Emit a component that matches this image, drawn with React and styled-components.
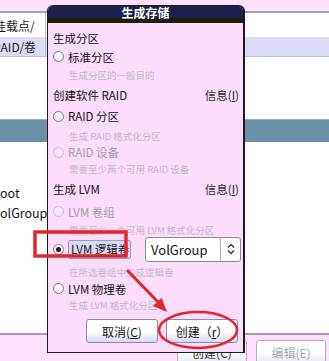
import React from "react";
import styled, { createGlobalStyle } from "styled-components";

const Global = createGlobalStyle`
  html, body { margin: 0; padding: 0; background: #fde0fb; }
  body { font-family: "Noto Sans CJK SC", "Noto Sans", sans-serif; }
`;

const Page = styled.div`
  position: relative;
  width: 329px;
  height: 361px;
  overflow: hidden;
  background: #fde0fb;
  font-family: "Noto Sans CJK SC", "Noto Sans", sans-serif;
  display: flex;
  flex-direction: column;
`;

const TopStrip = styled.div`
  flex: none;
  height: 11px;
`;

const Panel = styled.div`
  flex: none;
  height: 320px;
  background: #ffffff;
  border-top: 2px solid #a99cb9;
  border-bottom: 2px solid #a99cb9;
  display: flex;
  flex-direction: column;
`;

const HeaderRow = styled.div`
  flex: none;
  display: flex;
  height: ${(p) => p.$h}px;
  background: ${(p) => (p.$band ? "#dcdcf6" : "#ffffff")};
  border-bottom: ${(p) => (p.$band ? "1px solid #c2c2cc" : "none")};
`;

const HeaderCell = styled.div`
  width: 45px;
  border-right: 1px solid #b8b8c4;
  overflow: hidden;
  display: flex;
  align-items: center;
  font-size: 12px;
  color: #1a1a1a;
  white-space: nowrap;
`;

const HeaderText = styled.span`
  margin-left: ${(p) => p.$shift}px;
`;

const Spacer = styled.div`
  flex: none;
  height: ${(p) => p.$h}px;
`;

const BlueBar = styled.div`
  flex: none;
  height: 22px;
  border-top: 1px solid #88b2d6;
  background: #6a91a9;
`;

const TreeArea = styled.div`
  padding-top: 41px;
`;

const TreeLine = styled.div`
  line-height: 20px;
  font-size: 12.5px;
  color: #111;
  white-space: nowrap;
`;

const BottomBar = styled.div`
  flex: 1;
  display: flex;
  justify-content: flex-end;
  gap: 9px;
  padding: 5px 3px 0 0;
`;

const BgButton = styled.div`
  width: 70px;
  height: 28px;
  box-sizing: border-box;
  border: 1px solid #b4acc4;
  border-radius: 3px;
  background: linear-gradient(#ffffff, #ffffff 45%, #dcdcf8);
  color: ${(p) => (p.$disabled ? "#a9a9a9" : "#333")};
  font-size: 12px;
  display: flex;
  justify-content: center;
  padding-top: 3px;
`;

const Dialog = styled.div`
  position: absolute;
  left: 47px;
  top: 5px;
  width: 198px;
  height: 348px;
  box-sizing: border-box;
  border: 1px solid #1c1c1c;
  border-right-width: 2px;
  border-radius: 6px 6px 0 0;
  background: #fcdcfb;
  overflow: hidden;
  display: flex;
  flex-direction: column;
`;

const TitleBar = styled.div`
  flex: none;
  height: 12px;
  background: #1d1f4f;
  border-bottom: 5px solid #1f1d0a;
  color: #ffffff;
  font-weight: bold;
  font-size: 12px;
  line-height: 13px;
  text-align: center;
`;

const Body = styled.div`
  padding: 5px 2px 0 5px;
  display: flex;
  flex-direction: column;
`;

const Item = styled.div`
  flex: none;
  height: ${(p) => p.$h}px;
  display: flex;
  align-items: center;
  white-space: nowrap;
`;

const Heading = styled(Item)`
  justify-content: space-between;
  font-size: 11.5px;
  color: #151515;
`;

const InfoLink = styled.span`
  color: #2a2a2a;
  margin-right: 2px;
`;

const U = styled.span`
  text-decoration: underline;
`;

const RadioRow = styled(Item)`
  gap: 4px;
  font-size: 11.5px;
  color: ${(p) => (p.$disabled ? "#a69ea6" : "#151515")};
`;

const RadioCircle = styled.span`
  flex: none;
  width: 11px;
  height: 11px;
  box-sizing: border-box;
  border-radius: 50%;
  border: 1px solid ${(p) => (p.$disabled ? "#c8becd" : "#7d7d8d")};
  background: ${(p) =>
    p.$disabled ? "#fbe2fb" : "linear-gradient(#ffffff, #e8e8ef)"};
  display: flex;
  align-items: center;
  justify-content: center;
  &::after {
    content: "";
    display: ${(p) => (p.$checked ? "block" : "none")};
    width: 5px;
    height: 5px;
    border-radius: 50%;
    background: #1e1e1e;
  }
`;

const Desc = styled(Item)`
  padding-left: 16px;
  font-size: 9.5px;
  color: #c3b9c3;
`;

const LabelBox = styled.span`
  flex: none;
  width: 63px;
  height: 19px;
  box-sizing: border-box;
  padding: 0 2px;
  background: #dadaf6;
  border: 1px solid #9a9ac8;
  border-radius: 2px;
  overflow: hidden;
  display: flex;
  align-items: center;
`;

const Select = styled.div`
  flex: none;
  width: 96px;
  height: 25px;
  margin-left: 10px;
  box-sizing: border-box;
  border: 1px solid #8a8a98;
  border-radius: 3px;
  background: #ffffff;
  display: flex;
  align-items: stretch;
`;

const SelectText = styled.span`
  flex: 1;
  padding-left: 5px;
  font-size: 13px;
  color: #151515;
  display: flex;
  align-items: center;
`;

const SelectArrow = styled.span`
  width: 19px;
  border-left: 1px solid #b4b4bc;
  display: flex;
  align-items: center;
  justify-content: center;
`;

const ButtonRow = styled.div`
  margin-top: 4px;
  display: flex;
  justify-content: flex-end;
  gap: 8px;
  padding-right: 3px;
`;

const DlgButton = styled.div`
  width: 72px;
  height: 24px;
  box-sizing: border-box;
  border: 1px solid #8c8ca8;
  border-radius: 3px;
  background: linear-gradient(#ffffff 0%, #ffffff 55%, #d8d8f6 100%);
  font-size: 12px;
  color: #151515;
  display: flex;
  align-items: center;
  justify-content: center;
`;

const Overlay = styled.svg`
  position: absolute;
  left: 0;
  top: 0;
  pointer-events: none;
`;

const Radio = ({ h, disabled, checked, children }) => (
  <RadioRow $h={h} $disabled={disabled}>
    <RadioCircle $disabled={disabled} $checked={checked} />
    {children}
  </RadioRow>
);

export default function App() {
  return (
    <>
      <Global />
      <Page>
        <TopStrip />
        <Panel>
          <HeaderRow $h={24}>
            <HeaderCell>
              <HeaderText $shift={-6}>挂载点/</HeaderText>
            </HeaderCell>
          </HeaderRow>
          <HeaderRow $h={19} $band>
            <HeaderCell>
              <HeaderText $shift={-7}>RAID/卷</HeaderText>
            </HeaderCell>
          </HeaderRow>
          <Spacer $h={62} />
          <BlueBar />
          <TreeArea>
            <TreeLine>oot</TreeLine>
            <TreeLine>olGroup</TreeLine>
          </TreeArea>
        </Panel>
        <BottomBar>
          <BgButton>创建(C)</BgButton>
          <BgButton $disabled>编辑(E)</BgButton>
        </BottomBar>

        <Dialog>
          <TitleBar>生成存储</TitleBar>
          <Body>
            <Heading $h={20}>生成分区</Heading>
            <Radio h={17}>标准分区</Radio>
            <Desc $h={20}>生成分区的一般目的</Desc>
            <Heading $h={20}>
              创建软件 RAID
              <InfoLink>
                信息(<U>I</U>)
              </InfoLink>
            </Heading>
            <Radio h={22}>RAID 分区</Radio>
            <Desc $h={17}>生成 RAID 格式化分区</Desc>
            <Radio h={16} disabled>
              RAID 设备
            </Radio>
            <Desc $h={18}>需要至少两个可用 RAID 设备</Desc>
            <Heading $h={21}>
              生成 LVM
              <InfoLink>
                信息(<U>I</U>)
              </InfoLink>
            </Heading>
            <Radio h={25} disabled>
              LVM 卷组
            </Radio>
            <Desc $h={12}>需要至少一个可用 LVM 格式化分区</Desc>
            <RadioRow $h={26}>
              <RadioCircle $checked />
              <LabelBox>LVM 逻辑卷</LabelBox>
              <Select>
                <SelectText>VolGroup</SelectText>
                <SelectArrow>
                  <svg width="8" height="12" viewBox="0 0 8 12">
                    <path
                      d="M1 4.5 L4 1.5 L7 4.5 M1 7.5 L4 10.5 L7 7.5"
                      fill="none"
                      stroke="#333"
                      strokeWidth="1.3"
                    />
                  </svg>
                </SelectArrow>
              </Select>
            </RadioRow>
            <Desc $h={20}>在所选卷组中生成逻辑卷</Desc>
            <Radio h={13}>LVM 物理卷</Radio>
            <Desc $h={20}>生成 LVM 格式化分区</Desc>
            <ButtonRow>
              <DlgButton>
                取消(<U>C</U>)
              </DlgButton>
              <DlgButton>
                创建（<U>r</U>）
              </DlgButton>
            </ButtonRow>
          </Body>
        </Dialog>

        <Overlay width="329" height="361" viewBox="0 0 329 361">
          <rect
            x="35"
            y="232"
            width="91"
            height="24"
            fill="none"
            stroke="#e3262c"
            strokeWidth="3.5"
          />
          <ellipse
            cx="198"
            cy="330"
            rx="39"
            ry="18"
            fill="none"
            stroke="#e3262c"
            strokeWidth="2.5"
          />
          <line
            x1="127"
            y1="270"
            x2="158"
            y2="302"
            stroke="#e3262c"
            strokeWidth="3"
          />
          <polygon points="167,312 153,306 161.6,297.8" fill="#e3262c" />
        </Overlay>
      </Page>
    </>
  );
}
